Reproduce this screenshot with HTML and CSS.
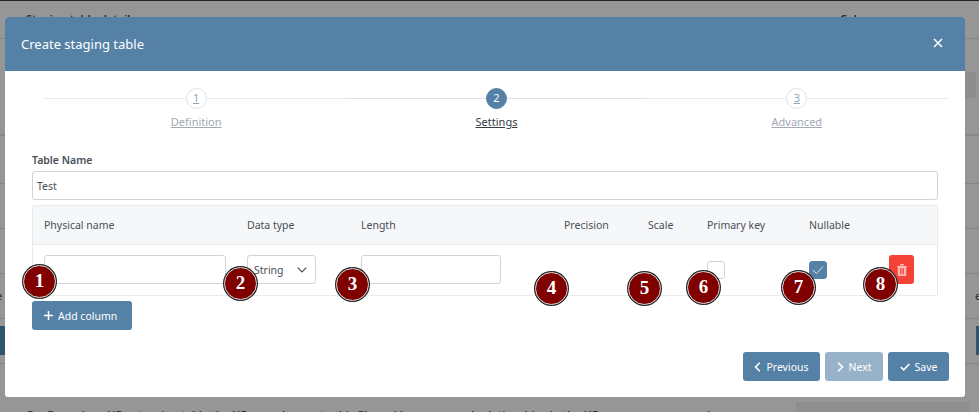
FILE: index.html
```html
<!DOCTYPE html>
<html lang="en">
<head>
    <meta charset="UTF-8">
    <title>Create staging table</title>
    <link rel="stylesheet" href="styles.css">
</head>
<body>
    <div class="page-behind">
        <div class="behind-row first"></div>
        <div class="behind-row second"></div>
        <div class="behind-row third"></div>
        <div class="behind-row"></div>
        <div class="behind-row"></div>
        <div class="behind-row"></div>
        <div class="behind-row"></div>
        <span class="behind-text behind-top-left">Staging table details</span>
        <span class="behind-text behind-top-right">Columns</span>
        <span class="behind-text behind-bottom">Configure how HR extension table the HR record maps to this file and how rows and relationships in the HR process are mapped</span>
        <span class="behind-text behind-bottom-right">Columns</span>
        <span class="behind-text behind-left-e">e</span>
        <span class="behind-text behind-right-e">e</span>
        <div class="behind-button left"></div>
        <div class="behind-button right"></div>
        <div class="behind-panel top"></div>
        <div class="behind-panel bottom"></div>
    </div>

    <div class="modal">
        <div class="modal-header">
            <h2>Create staging table</h2>
            <svg class="close-icon" width="10" height="10" viewBox="0 0 10 10"><path d="M1 1l8 8M9 1l-8 8" stroke="#fff" stroke-width="1.5"/></svg>
        </div>

        <div class="modal-body">
            <div class="steps">
                <div class="step">
                    <span class="step-circle">1</span>
                    <span class="step-label">Definition</span>
                </div>
                <div class="step active">
                    <span class="step-circle">2</span>
                    <span class="step-label">Settings</span>
                </div>
                <div class="step">
                    <span class="step-circle">3</span>
                    <span class="step-label">Advanced</span>
                </div>
            </div>

            <label class="field-label">Table Name</label>
            <div class="text-input name-input">Test</div>

            <div class="columns-table">
                <div class="table-row table-head">
                    <div>Physical name</div>
                    <div>Data type</div>
                    <div>Length</div>
                    <div>Precision</div>
                    <div>Scale</div>
                    <div>Primary key</div>
                    <div>Nullable</div>
                    <div></div>
                </div>
                <div class="table-row table-cells">
                    <div><div class="text-input"></div></div>
                    <div>
                        <div class="text-input select-input">String
                            <svg width="10" height="6" viewBox="0 0 10 6"><path d="M.7.7L5 5l4.3-4.3" fill="none" stroke="#444b52" stroke-width="1.1"/></svg>
                        </div>
                    </div>
                    <div><div class="text-input"></div></div>
                    <div></div>
                    <div></div>
                    <div><span class="checkbox"></span></div>
                    <div>
                        <span class="checkbox checked">
                            <svg width="12" height="10" viewBox="0 0 12 10"><path d="M1 5l3.500 3.500L11 1.500" fill="none" stroke="#dfe8ef" stroke-width="1"/></svg>
                        </span>
                    </div>
                    <div>
                        <span class="delete-button">
                            <svg width="10" height="12" viewBox="0 0 10 12"><path d="M0 2h10v1H9.200v8a1 1 0 0 1-1 1H1.800a1 1 0 0 1-1-1V3H0zM3.200 0h3.600l.5 1.500H2.700zM3 4.200v6h.9v-6zM6.100 4.200v6H7v-6zM4.550 4.200v6h.9v-6z" fill="#ffb9b5" fill-rule="evenodd"/></svg>
                        </span>
                    </div>
                </div>
            </div>

            <button class="btn add-button">
                <svg width="9" height="9" viewBox="0 0 9 9"><path d="M4.500 0v9M0 4.500h9" stroke="#fff" stroke-width="1.500"/></svg>
                Add column
            </button>

            <div class="modal-footer">
                <button class="btn">
                    <svg width="7" height="10" viewBox="0 0 7 10"><path d="M5.800.8L1.600 5l4.200 4.200" fill="none" stroke="#fff" stroke-width="1.600"/></svg>
                    Previous
                </button>
                <button class="btn disabled">
                    <svg width="7" height="10" viewBox="0 0 7 10"><path d="M1.200.8L5.400 5 1.200 9.200" fill="none" stroke="#fff" stroke-width="1.600"/></svg>
                    Next
                </button>
                <button class="btn">
                    <svg width="10" height="8" viewBox="0 0 10 8"><path d="M.8 4l2.900 2.900L9.300 1" fill="none" stroke="#fff" stroke-width="1.600"/></svg>
                    Save
                </button>
            </div>
        </div>
    </div>

    <span class="badge badge-1">1</span>
    <span class="badge badge-2">2</span>
    <span class="badge badge-3">3</span>
    <span class="badge badge-4">4</span>
    <span class="badge badge-5">5</span>
    <span class="badge badge-6">6</span>
    <span class="badge badge-7">7</span>
    <span class="badge badge-8">8</span>
</body>
</html>
```

FILE: styles.css
```css
* {
    margin: 0;
    padding: 0;
    box-sizing: border-box;
}

html, body {
    height: 100%;
    overflow: hidden;
}

body {
    font-family: "Noto Sans", "Open Sans", sans-serif;
    font-size: 10.500px;
    color: #495057;
    background-color: #969696;
    border-top: 1px solid #222;
    padding: 16px 14px 0 5px;
}

/* the page under the modal, only its edges show */
.page-behind {
    position: absolute;
    inset: 0;
}

.behind-row {
    height: 45px;
    border-bottom: 1px solid #868686;
}

.behind-row.first {
    height: 39px;
}

.behind-row.second {
    height: 97px;
    border-bottom-width: 2px;
}

.behind-row.third {
    height: 48px;
}

.behind-text {
    position: absolute;
    font-size: 11px;
    font-weight: 600;
    color: #2b2b2b;
    white-space: nowrap;
}

.behind-top-left {
    left: 26px;
    top: 11px;
}

.behind-top-right {
    left: 840px;
    top: 11px;
}

.behind-bottom {
    left: 26px;
    top: 407px;
}

.behind-bottom-right {
    left: 840px;
    top: 407px;
}

.behind-left-e {
    left: -4px;
    top: 288px;
    font-weight: 400;
}

.behind-right-e {
    left: 975px;
    top: 288px;
    font-weight: 400;
}

.behind-button {
    position: absolute;
    top: 326px;
    height: 29px;
    background-color: #2e5570;
}

.behind-button.left {
    left: 0;
    width: 5px;
}

.behind-button.right {
    left: 976px;
    width: 3px;
}

.behind-panel {
    position: absolute;
    background-color: #8e8e8e;
}

.behind-panel.top {
    left: 965px;
    top: 72px;
    width: 11px;
    height: 26px;
}

.behind-panel.bottom {
    left: 796px;
    top: 402px;
    width: 173px;
    height: 10px;
}

.modal {
    position: relative;
    width: 960px;
    height: 380px;
    background-color: white;
    border-radius: 3px;
}

.modal-header {
    display: flex;
    justify-content: space-between;
    align-items: center;
    height: 54px;
    padding: 0 22px 0 16px;
    background-color: #5481a5;
    border-radius: 3px 3px 0 0;
    color: white;
}

.modal-header h2 {
    font-size: 13px;
    font-weight: 400;
}

.close-icon {
    margin-bottom: 2px;
}

.modal-body {
    padding: 17px 27px 0;
}

.steps {
    display: flex;
    margin: 0 -9px 0 14px;
    height: 64px;
}

.step {
    position: relative;
    flex: 1;
    display: flex;
    flex-direction: column;
    align-items: center;
    font-size: 11px;
    color: #a3a9b3;
}

.step::before {
    content: "";
    position: absolute;
    top: 10px;
    left: 0;
    right: 0;
    height: 1px;
    background-color: #e9ebef;
}

.step:first-child::before {
    left: -3px;
}

.step:last-child::before {
    right: -2px;
}

.step.active::before {
    background-color: #dfe1ea;
}

.step-circle {
    position: relative;
    width: 21px;
    height: 21px;
    border: 1px solid #dee2e6;
    border-radius: 50%;
    background-color: white;
    color: #8ba5bd;
    text-align: center;
    line-height: 18px;
    text-decoration: underline;
}

.step-label {
    margin-top: 5px;
    text-decoration: underline;
}

.step.active {
    color: #343a40;
}

.step.active .step-circle {
    background-color: #5481a5;
    border-color: #5481a5;
    color: white;
    text-decoration: none;
}

.field-label {
    display: block;
    font-weight: 600;
    line-height: 15px;
    padding-top: 1px;
    margin-bottom: 3px;
}

.text-input {
    height: 29px;
    line-height: 28px;
    padding: 0 4px;
    border: 1px solid #ced4da;
    border-radius: 3px;
    background-color: white;
}

.name-input {
    margin-bottom: 5px;
}

.columns-table {
    border: 1px solid #e9ecef;
}

.table-row {
    display: grid;
    grid-template-columns: 203px 114px 203px 84px 59px 102px 80px 1fr;
    margin-left: -1px;
}

.table-row > div {
    padding-left: 12px;
}

.table-head {
    height: 39px;
    align-items: center;
    margin-left: 0;
    grid-template-columns: 202px 114px 203px 84px 59px 102px 80px 1fr;
    background-color: #f6f7f9;
    border-bottom: 1px solid #e9ecef;
}

.table-head > div:first-child {
    padding-left: 11px;
}

.table-cells {
    height: 50px;
    padding-top: 10px;
}

.table-cells > div:nth-child(1) .text-input {
    width: 182px;
}

.table-cells > div:nth-child(3) .text-input {
    width: 140px;
}

.select-input {
    display: flex;
    justify-content: space-between;
    align-items: center;
    width: 69px;
    padding: 0 8px 0 6px;
}

.checkbox {
    display: flex;
    justify-content: center;
    align-items: center;
    width: 18px;
    height: 18px;
    margin-top: 6px;
    border: 1px solid #ced4da;
    border-radius: 3px;
    background-color: white;
}

.checkbox.checked {
    background-color: #5481a5;
    border-color: #5481a5;
}

.delete-button {
    display: flex;
    justify-content: center;
    align-items: center;
    width: 25px;
    height: 29px;
    border-radius: 3px;
    background-color: #f44336;
}

.btn {
    display: inline-flex;
    align-items: center;
    gap: 5px;
    height: 29px;
    padding: 0 11.500px;
    border: none;
    border-radius: 3px;
    background-color: #5481a5;
    color: white;
    font-family: inherit;
    font-size: 10.500px;
    white-space: nowrap;
}

.btn.disabled {
    background-color: #98b3c9;
}

.add-button {
    display: flex;
    width: 100px;
    margin-top: 5px;
    padding: 0 12px;
}

.modal-footer {
    display: flex;
    justify-content: flex-end;
    gap: 5px;
    margin: 22px -11px 0 0;
}

.badge {
    position: absolute;
    width: 33px;
    height: 33px;
    border-radius: 50%;
    background-color: #800000;
    border: 1.500px solid #ddd;
    box-shadow: 0 0 0 1px #222;
    color: white;
    font-family: "Liberation Serif", serif;
    font-size: 19px;
    font-weight: 700;
    line-height: 30px;
    text-align: center;
}

.badge-1 { left: 23px; top: 265px; }
.badge-2 { left: 224px; top: 267px; }
.badge-3 { left: 336px; top: 268px; }
.badge-4 { left: 535px; top: 272px; }
.badge-5 { left: 628px; top: 272px; }
.badge-6 { left: 687px; top: 271px; }
.badge-7 { left: 782px; top: 271px; }
.badge-8 { left: 864px; top: 268px; }
```
